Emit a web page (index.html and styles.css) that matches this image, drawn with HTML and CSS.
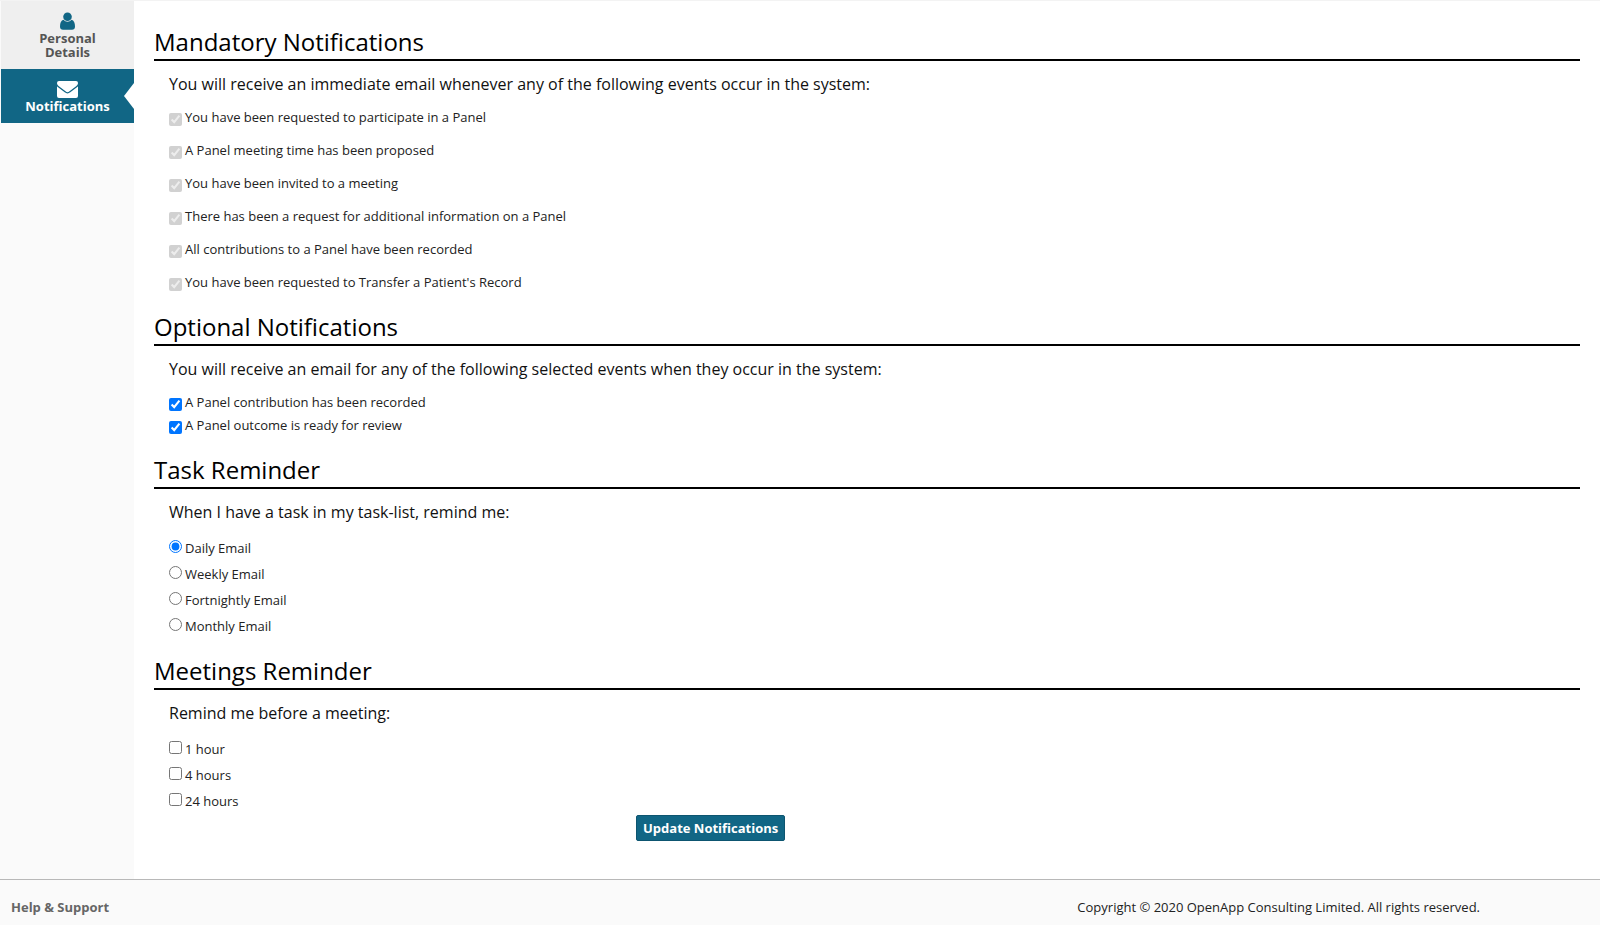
FILE: index.html
```html
<!DOCTYPE html>
<html lang="en">
<head>
<meta charset="utf-8">
<title>Notifications</title>
<link rel="stylesheet" href="styles.css">
</head>
<body>
<div class="layout">
  <nav class="sidebar">
    <a class="tab" href="#details">
      <svg class="icon-user" viewBox="0 0 15 18" aria-hidden="true"><circle cx="7.500" cy="4.700" r="4.300"/><path d="M3.500 7.800C1.100 8.500 0 11 0 14.400 0 16.500 1.200 17.700 3 17.700h9c1.800 0 3-1.200 3-3.300 0-3.400-1.100-5.900-3.500-6.600C10.500 9.100 9 9.800 7.500 9.800S4.500 9.100 3.500 7.800z"/></svg>
      <span>Personal Details</span>
    </a>
    <a class="tab active" href="#notifications" aria-current="page">
      <svg class="icon-mail" viewBox="0 0 21 17" aria-hidden="true"><path d="M2 0h17a2 2 0 0 1 2 2c0 1.500-1 2.700-2.200 3.600L12.500 10.200c-.8.600-1.400 1-2 1s-1.200-.4-2-1L2.200 5.600C1 4.700 0 3.500 0 2a2 2 0 0 1 2-2z"/><path d="M0 5.300c.4.500.9.900 1.400 1.300l6.300 4.600c.9.700 1.800 1.200 2.800 1.200s1.900-.5 2.800-1.200l6.300-4.600c.5-.4 1-.8 1.400-1.300V15a2 2 0 0 1-2 2H2a2 2 0 0 1-2-2z"/></svg>
      <span>Notifications</span>
    </a>
  </nav>
  <main class="content">
    <form class="form">
      <section>
        <h2>Mandatory Notifications</h2>
        <div class="body">
          <p>You will receive an immediate email whenever any of the following events occur in the system:</p>
          <div class="options spaced">
            <label><input type="checkbox" checked disabled>You have been requested to participate in a Panel</label>
            <label><input type="checkbox" checked disabled>A Panel meeting time has been proposed</label>
            <label><input type="checkbox" checked disabled>You have been invited to a meeting</label>
            <label><input type="checkbox" checked disabled>There has been a request for additional information on a Panel</label>
            <label><input type="checkbox" checked disabled>All contributions to a Panel have been recorded</label>
            <label><input type="checkbox" checked disabled>You have been requested to Transfer a Patient's Record</label>
          </div>
        </div>
      </section>
      <section>
        <h2>Optional Notifications</h2>
        <div class="body">
          <p>You will receive an email for any of the following selected events when they occur in the system:</p>
          <div class="options">
            <label><input type="checkbox" checked>A Panel contribution has been recorded</label>
            <label><input type="checkbox" checked>A Panel outcome is ready for review</label>
          </div>
        </div>
      </section>
      <section>
        <h2>Task Reminder</h2>
        <div class="body">
          <p>When I have a task in my task-list, remind me:</p>
          <div class="options reminder">
            <label><input type="radio" name="task" checked>Daily Email</label>
            <label><input type="radio" name="task">Weekly Email</label>
            <label><input type="radio" name="task">Fortnightly Email</label>
            <label><input type="radio" name="task">Monthly Email</label>
          </div>
        </div>
      </section>
      <section>
        <h2>Meetings Reminder</h2>
        <div class="body">
          <p>Remind me before a meeting:</p>
          <div class="options reminder">
            <label><input type="checkbox">1 hour</label>
            <label><input type="checkbox">4 hours</label>
            <label><input type="checkbox">24 hours</label>
          </div>
        </div>
      </section>
      <div class="actions"><button type="button">Update Notifications</button></div>
    </form>
  </main>
</div>
<footer class="footer">
  <a href="#help">Help &amp; Support</a>
  <span>Copyright © 2020 OpenApp Consulting Limited. All rights reserved.</span>
</footer>
</body>
</html>
```
FILE: styles.css
```css
* { box-sizing: border-box; }
body {
  margin: 0;
  min-height: 100vh;
  display: flex;
  flex-direction: column;
  border-top: 1px solid #f3f3f3;
  background: #fff;
  color: #222;
  font: 13px/18px "Open Sans", sans-serif;
}
.layout { flex: 1; display: flex; }
.sidebar {
  flex: none;
  width: 134px;
  padding-left: 1px;
  background: #fafafa;
}
.tab {
  position: relative;
  display: flex;
  flex-direction: column;
  align-items: center;
  padding: 11px 30px 10px;
  background: #efefef;
  color: #555;
  font-weight: 700;
  line-height: 14px;
  text-align: center;
  text-decoration: none;
}
.tab span { margin-top: 1px; }
.tab.active {
  padding: 12px 10px 10px;
  background: #116685;
  color: #fff;
}
.tab.active::after {
  content: "";
  position: absolute;
  right: 0;
  top: 14px;
  border: solid transparent;
  border-width: 13px 10px 13px 0;
  border-right-color: #fff;
}
.icon-user { width: 15px; height: 18px; fill: #116685; }
.icon-mail { width: 21px; height: 17px; fill: #fff; }
.content { flex: 1; padding: 25px 20px 37px; }
.form { display: flex; flex-direction: column; }
section { margin-bottom: 19px; }
h2 {
  margin: 0;
  padding-bottom: 2px;
  border-bottom: 2px solid #000;
  color: #000;
  font-size: 24px;
  font-weight: 400;
  line-height: 31px;
}
.body { padding: 12px 15px 0; }
p { margin: 0 0 14px; color: #111; font-size: 16px; line-height: 22px; }
.options { display: flex; flex-direction: column; align-items: flex-start; gap: 5px; }
.spaced { gap: 15px; }
.reminder { gap: 8px; padding-top: 3px; }
label {
  display: flex;
  align-items: flex-end;
  gap: 3px;
  padding-bottom: 2px;
  line-height: 16px;
}
.reminder label { align-items: flex-start; }
input { width: 13px; height: 13px; margin: 0 0 -1px; }
.actions { margin-top: -15px; padding-left: 482px; }
button {
  display: block;
  padding: 3px 6px;
  border: 1px solid #0d5570;
  border-radius: 2px;
  background: #116685;
  color: #fff;
  font: 700 13px/18px "Open Sans", sans-serif;
}
.footer {
  display: flex;
  justify-content: space-between;
  padding: 18px 120px 9px 11px;
  border-top: 1px solid #b8b8b8;
  background: #fafafa;
}
.footer a { color: #666; font-weight: 700; text-decoration: none; }
```
